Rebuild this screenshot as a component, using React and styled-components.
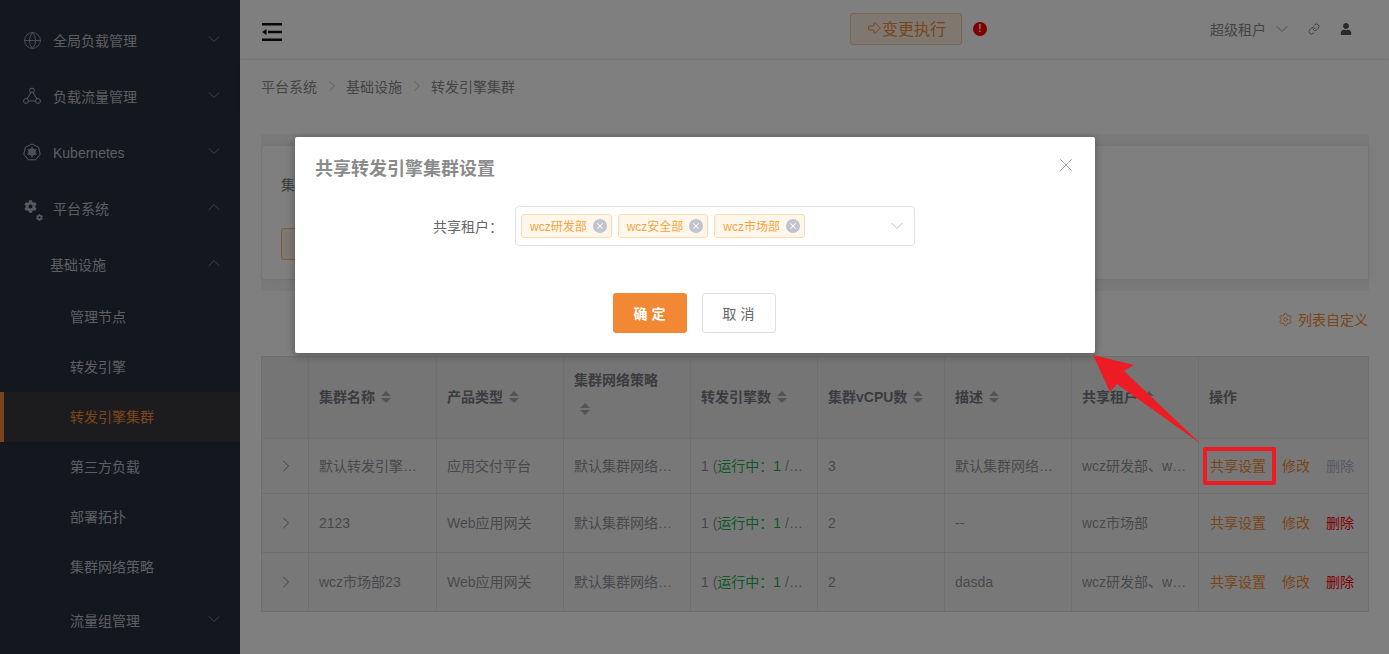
import React from "react";
import styled, { createGlobalStyle } from "styled-components";
import { ChevronDown, ChevronUp, ChevronRight, Globe, Link as LinkIcon, Settings, X, ArrowBigRight } from "lucide-react";
import { FaCog, FaUser } from "react-icons/fa";

const Global = createGlobalStyle`
  html, body { margin: 0; padding: 0; height: 100%; overflow: hidden; }
  body { background: #fff; font-family: "Liberation Sans", "Noto Sans CJK SC", sans-serif; font-size: 14px; color: #333; }
  * { box-sizing: border-box; }
`;

const Shell = styled.div`display: flex; width: 1389px; height: 654px; overflow: hidden; position: relative;`;

const Sidebar = styled.aside`width: 240px; flex: none; background: #27313f; padding-top: 12px; color: #b8bcc2; overflow: hidden;`;
const MenuRow = styled.div`
  display: flex; align-items: center; height: ${p => p.$h || 56}px;
  padding-left: ${p => p.$indent}px; padding-right: 16px;
  ${p => p.$h === 50 && "padding-bottom: 2px;"}
  ${p => p.$active && `background: #39393c; color: #f58a34; border-left: 4px solid #f58a34; padding-left: 66px;`}
`;
const MenuIcon = styled.span`width: 16px; height: 18px; margin-right: 13px; flex: none; display: flex; align-items: center; justify-content: center; color: #aeb2b8; position: relative; svg { flex: none; }`;
const MenuLabel = styled.span`flex: 1; ${p => p.$latin && "padding-top: 2px;"}`;
const MenuCaret = styled.span`display: flex; margin-bottom: 3px; color: #8e9298;`;
const SubGear = styled.span`position: absolute; right: -3px; bottom: -4px; display: flex;`;

const Main = styled.main`flex: 1; min-width: 0; display: flex; flex-direction: column;`;
const Header = styled.header`height: 60px; flex: none; display: flex; align-items: center; padding: 0 37px 2px 22px; background: #fff; border-bottom: 1px solid #f2f2f2;`;
const Hamburger = styled.svg`width: 20px; height: 18px; flex: none; display: block; margin-top: 7px;`;
const ChangeButton = styled.button`
  margin-left: 568px; width: 112px; height: 32px; padding: 0 0 3px; border: 1px solid #f6c49a; border-radius: 3px; background: #fff0e3;
  color: #f58a34; font: 16px "Liberation Sans", "Noto Sans CJK SC", sans-serif; display: flex; align-items: center; justify-content: center; margin-top: 1px;
`;
const Alert = styled.span`
  margin-left: 11px; width: 14px; height: 14px; border-radius: 50%; background: #ff0000; color: #fff; font-size: 10px; font-weight: bold; line-height: 14px; text-align: center; margin-top: 1px;
`;
const HeaderRight = styled.div`margin-left: auto; display: flex; align-items: center; color: #888;`;
const UserIcon = styled.span`display: flex; margin-left: ${p => p.$gap}px; color: #555;`;
const Crumbs = styled.nav`height: 54px; flex: none; display: flex; align-items: center; padding: 0 0 2px 21px; background: #fff; color: #888; box-shadow: 0 2px 6px rgba(0,0,0,.14);`;
const CrumbSep = styled.span`display: flex; width: 29px; justify-content: center; color: #aaa;`;

const Body = styled.div`flex: 1; padding: 20px 20px 0 21px; background: #fff;`;
const FilterBand = styled.section`background: #f4f4f6; padding: 11px 0 11px; height: 157px;`;
const FilterCard = styled.div`height: 135px; background: #fff; border: 1px solid #ebebee; border-radius: 3px; padding: 29px 19px 0; color: #777; box-shadow: 3px 0 8px rgba(0,0,0,.05);`;
const FilterLabel = styled.div`height: 20px; line-height: 20px;`;
const GhostButton = styled.button`display: block; margin-top: 33px; width: 90px; height: 32px; border: 1px solid #f6b98a; border-radius: 3px; background: #fff0e3;`;
const Toolbar = styled.div`height: 65px; display: flex; justify-content: flex-end; align-items: center; color: #f58a34; padding: 0 1px 9px 0;`;
const ToolIcon = styled.span`display: flex; margin-right: 5px;`;

const Table = styled.table`width: 1108px; border-collapse: collapse; table-layout: fixed; color: #919398;`;
const Th = styled.th`
  height: 82px; padding: 0 10px 2px; background: #ebebed; border: 1px solid #dfdfe3; text-align: left; font-weight: bold; color: #77797e; line-height: 28px;
`;
const Td = styled.td`
  height: ${p => p.$h}px; padding: 0 10px ${p => p.$latin ? 0 : 2}px; background: #f1f1f2; border: 1px solid #dfdfe3; white-space: nowrap; overflow: hidden; text-overflow: ellipsis;
`;
const ExpandCell = styled(Td)`text-align: center; color: #777; padding: 0 0 0 2px;`;
const ExpandIcon = styled.span`display: inline-flex; vertical-align: middle;`;
const Green = styled.span`color: #22b14c;`;
const Act = styled.span`
  color: ${p => p.$tone === "del" ? "#ff0000" : p.$tone === "off" ? "#aeb4c2" : "#f58a34"};
  margin-right: ${p => p.$last ? 0 : 16}px;
`;
const ActCell = styled(Td)`padding: 0 0 2px 11px;`;
const SortIcon = styled.svg`
  width: 10px; height: 12px; vertical-align: -1px;
  ${p => p.$block ? "display: block; margin: 9px 0 13px 6px;" : "display: inline-block; margin-left: 6px;"}
`;

const Mask = styled.div`position: absolute; inset: 0; background: rgba(0,0,0,.5);`;
const Modal = styled.div`position: absolute; left: 295px; top: 137px; width: 800px; height: 216px; background: #fff; border-radius: 2px; box-shadow: 0 2px 8px rgba(0,0,0,.35); padding: 20px 20px;`;
const Title = styled.h2`margin: 0; font-size: 18px; line-height: 24px; font-weight: bold; color: #8b8b8b;`;
const CloseBtn = styled.span`position: absolute; right: 18px; top: 17px; display: flex; color: #999;`;
const FormRow = styled.div`display: flex; align-items: center; margin-top: 25px;`;
const FormLabel = styled.label`width: 188px; text-align: right; color: #666; white-space: nowrap; padding-bottom: 1px;`;
const Select = styled.div`margin-left: 12px; width: 400px; height: 40px; border: 1px solid #dfe1e9; border-radius: 4px; display: flex; align-items: center; gap: 6px; padding: 0 7px 0 5px;`;
const Tag = styled.span`height: 24px; display: inline-flex; align-items: center; padding: 0 4px 1px 8px; background: #fff6ec; border: 1px solid #fcdcae; border-radius: 3px; color: #f0a63e; font-size: 12px;`;
const TagClose = styled.span`width: 14px; height: 14px; margin: 1px 0 0 6px; border-radius: 50%; background: #bfc4cf; color: #fff; display: inline-flex; align-items: center; justify-content: center;`;
const SelectCaret = styled.span`margin-left: auto; display: flex; color: #b8bbc6;`;
const Footer = styled.div`display: flex; justify-content: center; gap: 15px; margin-top: 47px; padding-right: 1px;`;
const Primary = styled.button`width: 74px; height: 40px; border: 0; border-radius: 3px; background: #f38834; color: #fff; font: bold 14px "Liberation Sans", "Noto Sans CJK SC", sans-serif; letter-spacing: 4px; padding: 0 0 0 3px;`;
const Secondary = styled.button`width: 74px; height: 40px; border: 1px solid #dcdfe6; border-radius: 3px; background: #fff; color: #666; font: 14px "Liberation Sans", "Noto Sans CJK SC", sans-serif; letter-spacing: 4px; padding: 0 0 0 3px;`;

const ArrowSvg = styled.svg`position: absolute; left: 1085px; top: 345px; width: 130px; height: 110px; pointer-events: none;`;
const Callout = styled.div`position: absolute; left: 1203px; top: 447px; width: 73px; height: 38px; border: 4px solid #ed1c24; border-radius: 2px; pointer-events: none;`;

const Triangle = () => (
  <svg width="18" height="18" viewBox="0 0 18 18" fill="none" stroke="currentColor" strokeWidth="1">
    <circle cx="9" cy="3.5" r="2.4" /><circle cx="3" cy="14" r="2.4" /><circle cx="15" cy="14" r="2.4" />
    <path d="M7.8 5.6 4.2 12M10.2 5.6 13.8 12M5.4 14h7.2" />
  </svg>
);
const Kube = () => (
  <svg width="18" height="18" viewBox="0 0 18 18" fill="none" stroke="currentColor">
    <path d="M9 1 15.6 4.2 17.2 11.2 12.6 16.8H5.4L.8 11.2 2.4 4.2Z" strokeWidth="1" />
    <circle cx="9" cy="9" r="2.8" strokeWidth="1.6" />
    <path d="M9 3.8V14.2M4.4 6.6 13.6 11.4M13.6 6.6 4.4 11.4" strokeWidth="1.1" />
  </svg>
);
const Sort = ({ block }) => (
  <SortIcon $block={block} viewBox="0 0 10 12" fill="#a9a9ad"><path d="M5 0 10 5H0ZM0 7H10L5 12Z" /></SortIcon>
);

const Menu = ({ icon, indent = 53, label, open, h, noCaret, active, latin }) => (
  <MenuRow $indent={icon ? 24 : indent} $h={h} $active={active}>
    {icon && <MenuIcon>{icon}</MenuIcon>}
    <MenuLabel $latin={latin}>{label}</MenuLabel>
    {!noCaret && <MenuCaret>{open ? <ChevronUp size={20} strokeWidth={1} /> : <ChevronDown size={20} strokeWidth={1} />}</MenuCaret>}
  </MenuRow>
);

const heads = [["集群名称"], ["产品类型"], ["集群网络策略", true], ["转发引擎数"], ["集群vCPU数"], ["描述"], ["共享租户"]];
const Status = () => <>1 (<Green>运行中：1</Green> /未运行：0)</>;
const rows = [
  { h: 55, c: ["默认转发引擎集群名称", "应用交付平台", "默认集群网络策略名称", null, "3", "默认集群网络策略描述", "wcz研发部、wcz安全部"], off: true },
  { h: 59, c: ["2123", "Web应用网关", "默认集群网络策略名称", null, "2", "--", "wcz市场部"] },
  { h: 59, c: ["wcz市场部23", "Web应用网关", "默认集群网络策略名称", null, "2", "dasda", "wcz研发部、wcz安全部"] },
];
const isLatin = c => typeof c === "string" && /^[\x00-\x7f]+$/.test(c);

export default function App() {
  return (
    <Shell>
      <Global />
      <Sidebar>
        <Menu icon={<Globe size={19} strokeWidth={1} />} label="全局负载管理" />
        <Menu icon={<Triangle />} label="负载流量管理" />
        <Menu icon={<Kube />} label="Kubernetes" latin />
        <Menu icon={<><FaCog size={13} style={{ marginRight: 3, marginTop: -4 }} /><SubGear><FaCog size={7} /></SubGear></>} label="平台系统" open />
        <Menu indent={50} label="基础设施" open />
        <Menu indent={70} h={50} label="管理节点" noCaret />
        <Menu indent={70} h={50} label="转发引擎" noCaret />
        <Menu indent={70} h={50} label="转发引擎集群" noCaret active />
        <Menu indent={70} h={50} label="第三方负载" noCaret />
        <Menu indent={70} h={50} label="部署拓扑" noCaret />
        <Menu indent={70} h={50} label="集群网络策略" noCaret />
        <Menu indent={70} label="流量组管理" />
      </Sidebar>
      <Main>
        <Header>
          <Hamburger viewBox="0 0 20 18" fill="#111">
            <path d="M0 0h20v2.4H0zM6 7.8h14v2.4H6zM0 15.6h20V18H0zM4.5 6v6L0 9z" />
          </Hamburger>
          <ChangeButton><ArrowBigRight size={16} strokeWidth={1.5} />变更执行</ChangeButton>
          <Alert>!</Alert>
          <HeaderRight>
            超级租户
            <ChevronDown size={20} strokeWidth={1} style={{ marginLeft: 6 }} />
            <UserIcon $gap={16}><LinkIcon size={12} strokeWidth={1.4} /></UserIcon>
            <UserIcon $gap={20}><FaUser size={12} /></UserIcon>
          </HeaderRight>
        </Header>
        <Crumbs>
          平台系统<CrumbSep><ChevronRight size={18} strokeWidth={1} /></CrumbSep>
          基础设施<CrumbSep><ChevronRight size={18} strokeWidth={1} /></CrumbSep>
          转发引擎集群
        </Crumbs>
        <Body>
          <FilterBand>
            <FilterCard>
              <FilterLabel>集群名称</FilterLabel>
              <GhostButton />
            </FilterCard>
          </FilterBand>
          <Toolbar><ToolIcon><Settings size={15} strokeWidth={1.3} /></ToolIcon>列表自定义</Toolbar>
          <Table>
            <colgroup>
              <col style={{ width: 47 }} />
              {heads.map((_, i) => <col key={i} style={{ width: i === 0 ? 128 : 127 }} />)}
              <col style={{ width: 170 }} />
            </colgroup>
            <thead>
              <tr>
                <Th />
                {heads.map(([t, wrap]) => <Th key={t}>{t}<Sort block={wrap} /></Th>)}
                <Th>操作</Th>
              </tr>
            </thead>
            <tbody>
              {rows.map((r, i) => (
                <tr key={i}>
                  <ExpandCell $h={r.h}><ExpandIcon><ChevronRight size={20} strokeWidth={1.1} /></ExpandIcon></ExpandCell>
                  {r.c.map((c, j) => <Td key={j} $h={r.h} $latin={isLatin(c)}>{c === null ? <Status /> : c}</Td>)}
                  <ActCell $h={r.h}>
                    <Act>共享设置</Act><Act>修改</Act>
                    <Act $tone={r.off ? "off" : "del"} $last>删除</Act>
                  </ActCell>
                </tr>
              ))}
            </tbody>
          </Table>
        </Body>
      </Main>
      <Mask />
      <Modal>
        <Title>共享转发引擎集群设置</Title>
        <CloseBtn><X size={22} strokeWidth={0.9} /></CloseBtn>
        <FormRow>
          <FormLabel>共享租户：</FormLabel>
          <Select>
            {["wcz研发部", "wcz安全部", "wcz市场部"].map(t => (
              <Tag key={t}>{t}<TagClose><X size={10} strokeWidth={2.5} /></TagClose></Tag>
            ))}
            <SelectCaret><ChevronDown size={20} strokeWidth={1.2} /></SelectCaret>
          </Select>
        </FormRow>
        <Footer>
          <Primary>确定</Primary>
          <Secondary>取消</Secondary>
        </Footer>
      </Modal>
      <ArrowSvg viewBox="1085 345 130 110"><path d="M1093 355 1134 365 1124 371 1201 444 1117 384 1110 392Z" fill="#ed1c24" /></ArrowSvg>
      <Callout />
    </Shell>
  );
}
